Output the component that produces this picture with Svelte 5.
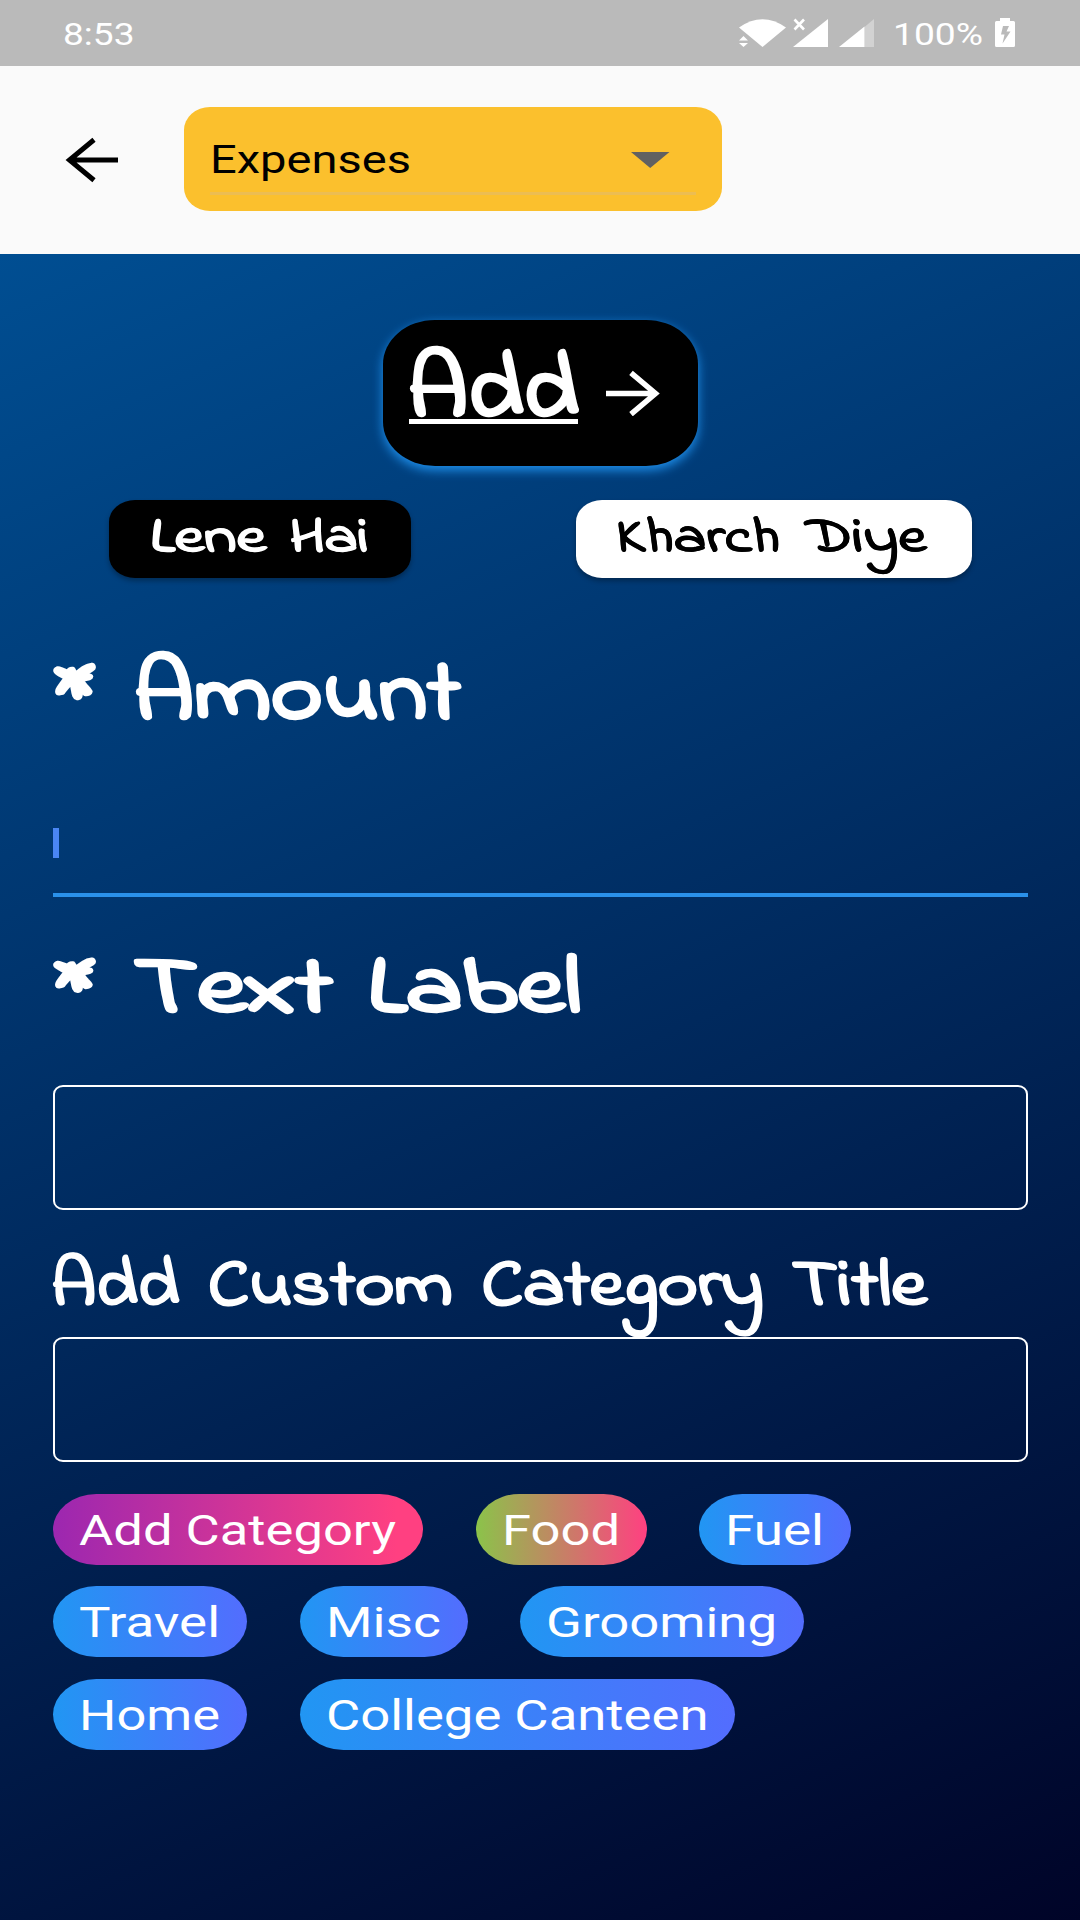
<script>
  // Each word carries its own start and measure, so the lettering keeps its wide set.
  const addWords = [{ t: 'Add', x: 24.5, w: 171 }];
  const leneWords = [{ t: 'Lene', x: 41, w: 116 }, { t: 'Hai', x: 180.5, w: 79 }];
  const kharchWords = [{ t: 'Kharch', x: 40, w: 164 }, { t: 'Diye', x: 230, w: 120.5 }];
  const amountWords = [{ t: '*', x: -2, w: 45, dy: -1 }, { t: 'Amount', x: 80.5, w: 327 }];
  const labelWords = [{ t: '*', x: -2, w: 45, dy: -2 }, { t: 'Text', x: 81, w: 198.5 }, { t: 'Label', x: 314.5, w: 214 }];
  const customWords = [
    { t: 'Add', x: -2, w: 128 },
    { t: 'Custom', x: 155, w: 244.5 },
    { t: 'Category', x: 428.5, w: 282 },
    { t: 'Title', x: 739, w: 134.5 }
  ];
  const rows = [
    [
      { name: 'Add Category', width: 370, tone: 'purple' },
      { name: 'Food', width: 171, tone: 'green' },
      { name: 'Fuel', width: 152, tone: 'blue' }
    ],
    [
      { name: 'Travel', width: 194, tone: 'blue' },
      { name: 'Misc', width: 168, tone: 'blue' },
      { name: 'Grooming', width: 284, tone: 'blue' }
    ],
    [
      { name: 'Home', width: 194, tone: 'blue' },
      { name: 'College Canteen', width: 435.5, tone: 'blue' }
    ]
  ];
</script>

{#snippet line(words, width, height, baseline, size, cls)}
  <svg class="line {cls}" {width} {height} viewBox="0 0 {width} {height}">
    {#each words as word}
      <text x={word.x} y={baseline + (word.dy ?? 0)} font-size={size} textLength={word.w} lengthAdjust="spacingAndGlyphs">{word.t}</text>
    {/each}
  </svg>
{/snippet}

<div class="screen">
  <header class="status">
    {@render line([{ t: '8:53', x: 0, w: 71.5 }], 80, 65, 44.5, 31, 'plain')}
    <svg class="icons" width="280" height="65" viewBox="736 0 280 65" fill="#fff">
      <path d="M739 27.500Q762.500 11 786 27.500L762.500 47Z" />
      <path d="M739 40.500L743.500 36L748 40.500ZM739 43L743.500 47L748 43Z" stroke="#bababa" stroke-width="1" paint-order="stroke" />
      <path d="M794.500 19.500L804 29.500M804 19.500L794.500 29.500" fill="none" stroke="#fff" stroke-width="2.600" />
      <path d="M793 47L828 19V47Z" />
      <path d="M864.500 27L874 19V47H864.500Z" opacity=".35" />
      <path d="M839 47L864.500 26.500V47Z" />
      <text x="893" y="44.500" font-size="31" textLength="90" lengthAdjust="spacingAndGlyphs">100%</text>
      <path fill-rule="evenodd" d="M1000 18H1010V21H1013.500Q1015 21 1015 22.500V45.500Q1015 47 1013.500 47H996.500Q995 47 995 45.500V22.500Q995 21 996.500 21H1000ZM1003 26L1001 34.500H1004.500L1002.500 43.500L1010.500 31.500H1006.500L1009 26Z" />
    </svg>
  </header>

  <nav class="bar">
    <svg class="back" width="54" height="46" viewBox="65 137 54 46" fill="none" stroke="#000" stroke-width="5">
      <path d="M118 160H70M94 139.800L69.500 160L94 180.200" />
    </svg>
    <div class="select">
      <div class="value">
        {@render line([{ t: 'Expenses', x: -1, w: 201 }], 210, 85, 65.5, 39.5, 'plain')}
        <svg class="caret" width="39" height="16" viewBox="0 0 39 16"><path d="M0 0H38.500L19.200 16Z" fill="#616161" /></svg>
      </div>
    </div>
  </nav>

  <main>
    <button class="add">
      {@render line(addWords, 200, 146, 95, 87, 'hand under large')}
      <svg width="54" height="46" viewBox="0 0 54 46" fill="none" stroke="#fff" stroke-width="5.500">
        <path d="M0 23.500H48M25 2.800L49.500 23.500L25 44.200" />
      </svg>
    </button>

    <div class="modes">
      <button class="mode dark">{@render line(leneWords, 302, 78, 51, 47, 'hand small')}</button>
      <button class="mode light">{@render line(kharchWords, 396, 78, 50.5, 48, 'hand small thin')}</button>
    </div>

    <section class="amount">
      {@render line(amountWords, 975, 110, 78, 86, 'hand large')}
      <div class="entry"><span class="cursor"></span></div>
    </section>

    <section class="label">
      {@render line(labelWords, 975, 110, 70.5, 80, 'hand large')}
      <div class="box"></div>
    </section>

    <section class="custom">
      {@render line(customWords, 975, 100, 67, 65.5, 'hand')}
      <div class="box"></div>
    </section>

    <div class="chips">
      {#each rows as row}
        <div class="row">
          {#each row as chip}
            <button class="chip {chip.tone}">
              {@render line([{ t: chip.name, x: 26, w: chip.width - 53 }], chip.width, 71, 51, 43, 'plain')}
            </button>
          {/each}
        </div>
      {/each}
    </div>
  </main>
</div>

<style>
  :global(body) { margin: 0; }
  .screen {
    width: 1080px;
    height: 1920px;
    overflow: hidden;
    display: flex;
    flex-direction: column;
    font-family: Roboto, sans-serif;
  }
  svg { display: block; flex: none; }
  button { border: 0; padding: 0; background: none; font: inherit; }
  .line { overflow: visible; fill: currentColor; }
  .plain { font-family: Roboto, sans-serif; }
  .hand {
    font-family: "Indie Flower", Lato, sans-serif;
    font-weight: 700;
    stroke: currentColor;
    stroke-width: 1.2px;
    stroke-linejoin: round;
  }
  .large { stroke-width: 1.8px; }
  .small { stroke-width: 0.8px; }
  .thin { stroke-width: 0.4px; }

  .status {
    box-sizing: border-box;
    height: 65.5px;
    flex: none;
    padding: 0 64px 0 63px;
    display: flex;
    justify-content: space-between;
    background: #bababa;
    color: #fff;
  }
  .bar {
    box-sizing: border-box;
    height: 188.5px;
    flex: none;
    display: flex;
    align-items: center;
    padding: 0 0 1px 65px;
    background: #fafafa;
  }
  .back { margin-top: 1px; }
  .select {
    box-sizing: border-box;
    width: 538px;
    height: 104px;
    margin-left: 65px;
    padding: 0 26px;
    border-radius: 26px / 23px;
    background: #fbc02d;
  }
  .value {
    box-sizing: border-box;
    height: 88px;
    padding: 0 26px 0 1px;
    display: flex;
    align-items: center;
    justify-content: space-between;
    border-bottom: 3px solid #ecbd52;
  }
  .caret { margin-top: 20px; }

  main {
    box-sizing: border-box;
    flex: 1;
    padding: 66px 52px 0 53px;
    color: #fff;
    background: linear-gradient(156.5deg, #004e92, #000428);
    display: flex;
    flex-direction: column;
  }
  .add {
    width: 315px;
    height: 146px;
    align-self: center;
    display: flex;
    align-items: center;
    gap: 23px;
    border-radius: 52px / 44px;
    background: #000;
    color: #fff;
    box-shadow: 0 4px 11px rgba(33, 150, 243, 0.95);
  }
  .under { background: linear-gradient(#fff, #fff) 26px 99px / 169px 5px no-repeat; }
  .modes {
    margin: 34px 56px 0 55.5px;
    display: flex;
    justify-content: space-between;
  }
  .mode {
    height: 78px;
    border-radius: 26px / 22px;
    box-shadow: 0 3px 5px rgba(0, 0, 0, 0.3);
  }
  .dark { background: #000; color: #fff; }
  .light { background: #fff; color: #000; }

  .amount { margin-top: 62px; }
  .entry {
    box-sizing: border-box;
    height: 147px;
    padding-top: 78px;
    border-bottom: 4px solid #2a91ea;
  }
  .cursor { display: block; width: 6px; height: 30px; background: #4a86f4; }
  .label { margin-top: 43px; }
  .box {
    box-sizing: border-box;
    height: 125px;
    border: 2px solid #fff;
    border-radius: 10px / 9px;
  }
  .label .box { margin-top: 34.5px; }
  .custom { margin-top: 27px; }
  .chips {
    margin-top: 32px;
    display: flex;
    flex-direction: column;
    gap: 21.7px;
  }
  .row { display: flex; gap: 52.5px; }
  .chip { height: 71px; border-radius: 44px / 36px; color: #fff; }
  .purple { background: linear-gradient(90deg, #9c27b0, #ff4081 93%); }
  .green { background: linear-gradient(90deg, #8bc34a, #ff4081); }
  .blue { background: linear-gradient(90deg, #2196f3, #536dfe); }
</style>
